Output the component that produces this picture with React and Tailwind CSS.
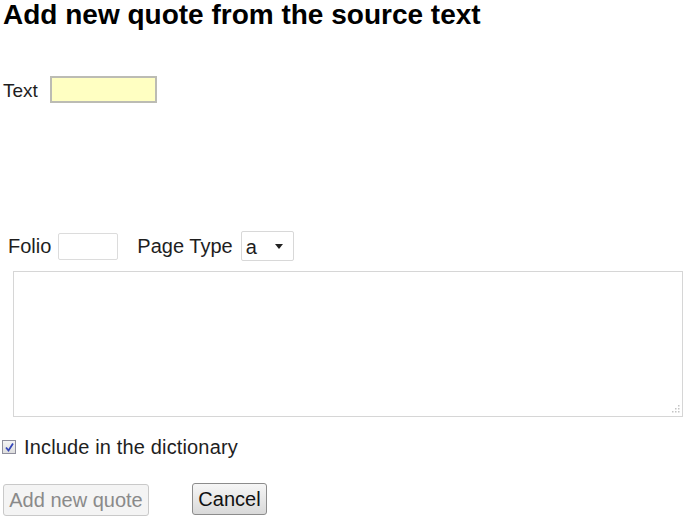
import React, { useState } from "react";

export default function App() {
  const [text, setText] = useState("");
  const [folio, setFolio] = useState("");
  const [pageType, setPageType] = useState("a");
  const [body, setBody] = useState("");
  const [inDict, setInDict] = useState(true);

  return (
    <div className="min-h-[518px] w-[685px] bg-white pl-[3px] text-[#1e1e1e] font-['Liberation_Sans',Arial,sans-serif]">
      {/* HEADER */}
      <h1 className="text-[28px] leading-[30px] font-bold text-black">
        Add new quote from the source text
      </h1>

      {/* QUOTE TEXT */}
      <div className="mt-[46px] flex items-center h-[27px]">
        <label className="text-[19px] leading-[27px] pt-[2px]">Text</label>
        <input
          value={text}
          onChange={(e) => setText(e.target.value)}
          className="ml-[12px] w-[107px] h-[27px] bg-[#ffffc2] border-2 border-[#bcbcb4] outline-none px-1 text-[16px]"
        />
      </div>

      {/* FOLIO + PAGE TYPE */}
      <div className="mt-[128px] flex items-center h-[30px] pl-[5px] text-[20px]">
        <span className="leading-[24px]">Folio</span>
        <input
          value={folio}
          onChange={(e) => setFolio(e.target.value)}
          className="ml-[7px] w-[60px] h-[27px] border border-[#dcdcdc] rounded-[2px] outline-none px-1 text-[16px]"
        />
        <span className="ml-[19px] leading-[24px]">Page Type</span>
        <div className="relative ml-[8px] w-[53px] h-[30px]">
          <select
            value={pageType}
            onChange={(e) => setPageType(e.target.value)}
            className="appearance-none w-full h-full border border-[#d8d8d8] rounded-[2px] bg-white pl-[4px] text-[20px] text-[#1e1e1e] outline-none"
          >
            <option value="a">a</option>
            <option value="b">b</option>
          </select>
          <svg
            className="absolute right-[11px] top-[13px] pointer-events-none"
            width="8"
            height="5"
            viewBox="0 0 8 5"
          >
            <path d="M0 0 H8 L4 5 Z" fill="#222" />
          </svg>
        </div>
      </div>

      {/* QUOTE BODY */}
      <div className="relative mt-[10px] ml-[10px] w-[670px] h-[146px]">
        <textarea
          value={body}
          onChange={(e) => setBody(e.target.value)}
          className="w-full h-full border border-[#d6d6d6] resize-none outline-none p-1 text-[16px]"
        />
        <svg
          className="absolute right-[3px] bottom-[4px] pointer-events-none"
          width="9"
          height="9"
          viewBox="0 0 9 9"
        >
          <rect x="7" y="1" width="1.5" height="1.5" fill="#c4c4c4" />
          <rect x="4" y="4" width="1.5" height="1.5" fill="#c4c4c4" />
          <rect x="7" y="4" width="1.5" height="1.5" fill="#c4c4c4" />
          <rect x="1" y="7" width="1.5" height="1.5" fill="#c4c4c4" />
          <rect x="4" y="7" width="1.5" height="1.5" fill="#c4c4c4" />
          <rect x="7" y="7" width="1.5" height="1.5" fill="#c4c4c4" />
        </svg>
      </div>

      {/* DICTIONARY CHECKBOX */}
      <label className="mt-[18px] flex items-center h-[24px] text-[20px] cursor-pointer -ml-[1px]">
        <span
          onClick={() => setInDict(!inDict)}
          className="w-[14px] h-[14px] border border-[#8f8f9d] bg-gradient-to-b from-[#f4f4f4] to-[#dedede] flex items-center justify-center"
        >
          {inDict && (
            <svg width="11" height="11" viewBox="0 0 11 11">
              <path
                d="M2 5.5 L4.5 8.5 L9 1.5"
                fill="none"
                stroke="#3446b8"
                strokeWidth="1.8"
              />
            </svg>
          )}
        </span>
        <span className="ml-[8px] leading-[24px] tracking-[0.15px]">Include in the dictionary</span>
      </label>

      {/* ACTIONS */}
      <div className="mt-[24px] flex items-start">
        <button
          disabled
          className="w-[146px] h-[32px] mt-[1px] border border-[#c9c9c9] rounded-[3px] bg-[#f4f4f4] text-[20px] text-[#8a8a8a]"
        >
          Add new quote
        </button>
        <button className="ml-[43px] w-[75px] h-[32px] border border-[#8c8c8c] rounded-[3px] bg-gradient-to-b from-[#f6f6f6] to-[#d9d9d9] text-[20px] text-[#111]">
          Cancel
        </button>
      </div>
    </div>
  );
}
